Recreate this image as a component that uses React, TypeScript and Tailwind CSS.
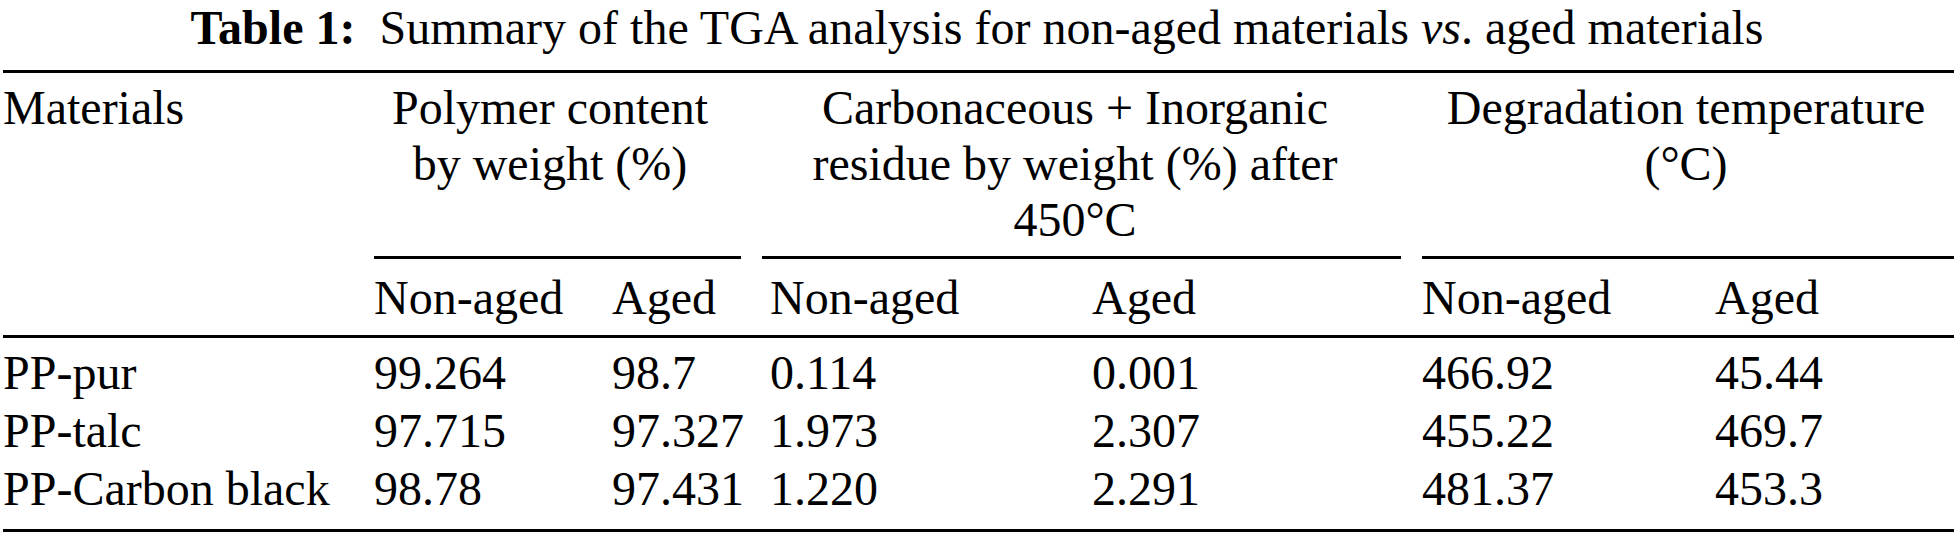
const COLS = "grid grid-cols-[371px_238px_158px_322px_330px_293px_239px]";

const rows = [
  ["PP-pur", "99.264", "98.7", "0.114", "0.001", "466.92", "45.44"],
  ["PP-talc", "97.715", "97.327", "1.973", "2.307", "455.22", "469.7"],
  ["PP-Carbon black", "98.78", "97.431", "1.220", "2.291", "481.37", "453.3"],
];

export default function App() {
  return (
    <div className="w-[1954px] h-[537px] bg-white text-black font-['Liberation_Serif','Times_New_Roman',serif] text-[48px] leading-[56px]">
      {/* Caption */}
      <p className="text-center whitespace-pre">
        <b>Table 1:</b>
        {"  Summary of the TGA analysis for non-aged materials "}
        <i>vs</i>
        {". aged materials"}
      </p>

      <div className="ml-[3px] mt-[14px] border-t-[3px] border-black">
        {/* Header */}
        <div className={COLS}>
          <div className="pt-[7px]">Materials</div>
          <div className="col-span-2 pt-[7px] pr-[44px] text-center">
            Polymer content
            <br />
            by weight (%)
          </div>
          <div className="col-span-2 pt-[7px] pr-[42px] text-center">
            Carbonaceous + Inorganic
            <br />
            residue by weight (%) after
            <br />
            450°C
          </div>
          <div className="col-span-2 pt-[7px] pr-[4px] text-center">
            Degradation temperature
            <br />
            (°C)
          </div>

          {/* Partial rules */}
          <div className="col-start-2 col-span-2 mt-[8px] mr-[29px] border-t-[3px] border-black" />
          <div className="col-span-2 mt-[8px] ml-[-8px] mr-[21px] border-t-[3px] border-black" />
          <div className="col-span-2 mt-[8px] border-t-[3px] border-black" />

          <div className="col-start-2 pt-[11px] pb-[9px]">Non-aged</div>
          <div className="pt-[11px] pb-[9px]">Aged</div>
          <div className="pt-[11px] pb-[9px]">Non-aged</div>
          <div className="pt-[11px] pb-[9px]">Aged</div>
          <div className="pt-[11px] pb-[9px]">Non-aged</div>
          <div className="pt-[11px] pb-[9px]">Aged</div>
        </div>

        {/* Body */}
        <div className={`${COLS} border-t-[3px] border-b-[3px] border-black pt-[6px] pb-[11px] leading-[58px]`}>
          {rows.map((r) =>
            r.map((cell, i) => (
              <div key={r[0] + i} className="whitespace-nowrap">
                {cell}
              </div>
            ))
          )}
        </div>
      </div>
    </div>
  );
}
